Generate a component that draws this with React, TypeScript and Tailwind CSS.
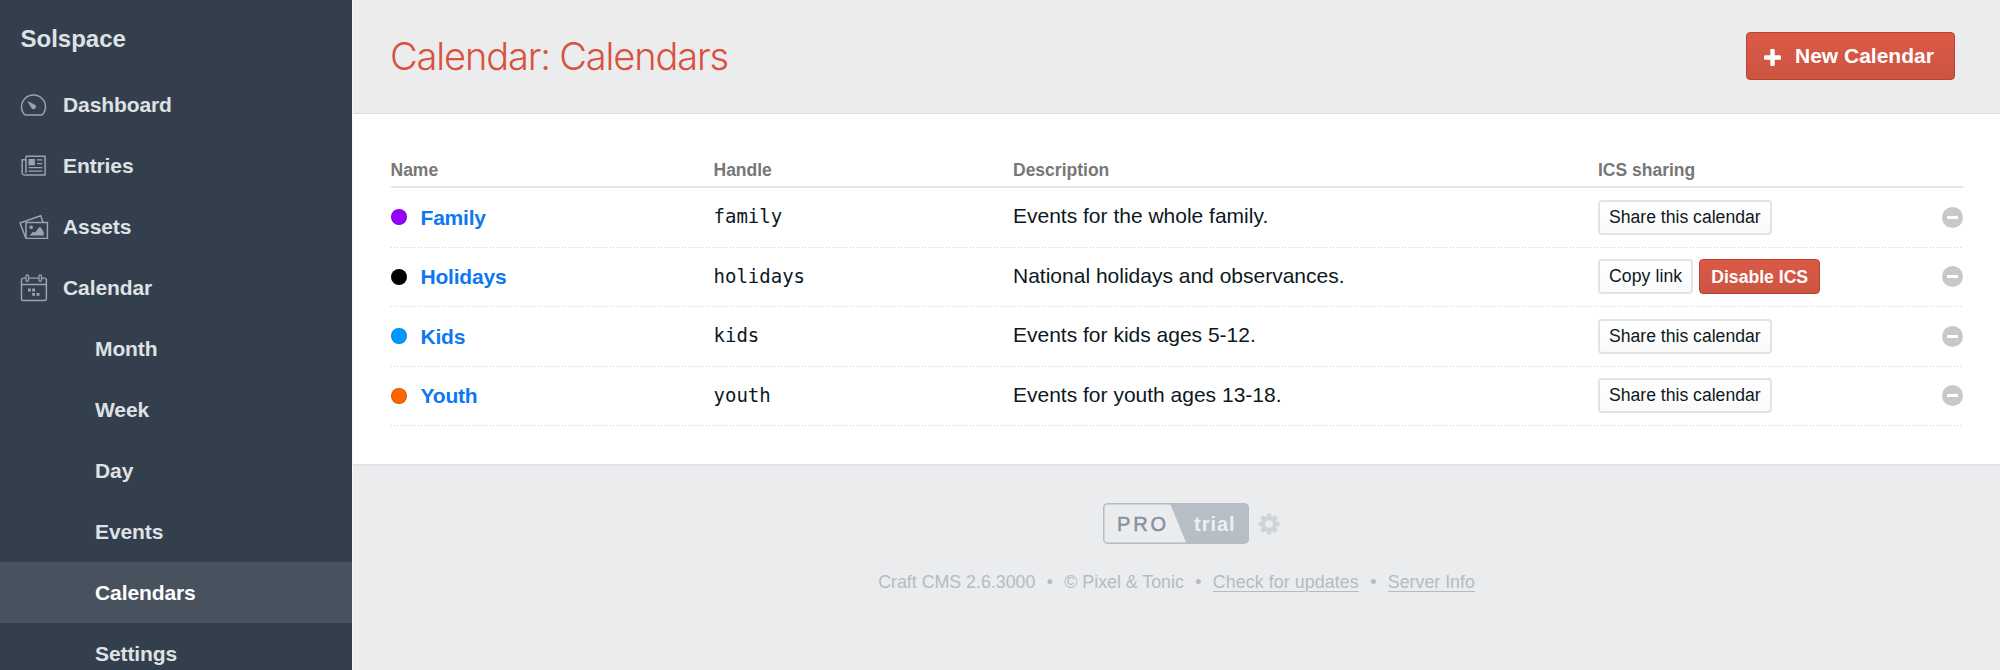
import React from "react";

const navItems = [
  { label: "Dashboard", icon: "dashboard" },
  { label: "Entries", icon: "entries" },
  { label: "Assets", icon: "assets" },
  { label: "Calendar", icon: "calendar" },
];

const subItems = ["Month", "Week", "Day", "Events", "Calendars", "Settings"];

const calendars = [
  { name: "Family", handle: "family", dot: "bg-[#9600ff]", text: "Events for the whole family.", shared: false },
  { name: "Holidays", handle: "holidays", dot: "bg-black", text: "National holidays and observances.", shared: true },
  { name: "Kids", handle: "kids", dot: "bg-[#0099ff]", text: "Events for kids ages 5-12.", shared: false },
  { name: "Youth", handle: "youth", dot: "bg-[#ff6600]", text: "Events for youth ages 13-18.", shared: false },
];

const COLS = "grid grid-cols-[323px_299.5px_585px_1fr_21px]";

function NavIcon({ name }: { name: string }) {
  return (
    <svg width="34" height="32" viewBox="0 0 32 30" fill="none" stroke="#9ca3ab" strokeWidth="1.4">
      {name === "dashboard" && (
        <>
          <path d="M6.7 24.4C4 21.900 3.300 19 3.300 16.800a11.300 11.200 0 0 1 22.600 0c0 2.200-.7 5.100-3.400 7.600z" strokeLinejoin="round" />
          <path d="M8.600 10.900l7.200 3.800a2.300 2.300 0 1 1-3.300 2.900z" fill="#9ca3ab" stroke="none" />
        </>
      )}
      {name === "entries" && (
        <>
          <path d="M7.500 5.800h18v17.600H5.800a1.900 1.900 0 0 1-1.900-1.900V9.100h3.300M7.500 5.800v15.800" strokeLinejoin="round" />
          <path d="M9.900 8.400h6v6h-6z" fill="#9ca3ab" stroke="none" />
          <path d="M17.900 9.200h5M17.900 12.700h5M9.900 16.500h13M9.900 19.900h13" strokeWidth="1.200" />
        </>
      )}
      {name === "assets" && (
        <>
          <path d="M7.500 10.700h20.200v15H7.500z" />
          <path d="M7.200 25.200L1.900 11.200 21.400 4.400l2 6" strokeLinejoin="round" />
          <circle cx="12.400" cy="15.300" r="1.700" fill="#9ca3ab" stroke="none" />
          <path d="M10.900 22.900l3.200-3.500 2 .8 4.100-5.100 1.600.6 2.400 4.300v2.900z" fill="#9ca3ab" stroke="none" />
        </>
      )}
      {name === "calendar" && (
        <>
          <path d="M7.200 5.700H5.100a1.800 1.800 0 0 0-1.800 1.800v17.500a1.800 1.800 0 0 0 1.800 1.800h19.800a1.800 1.800 0 0 0 1.800-1.800V7.500a1.800 1.800 0 0 0-1.800-1.800H22.500M10.300 5.700h9M3.300 11.800h23.400" />
          <rect x="7.500" y="2.700" width="2.400" height="6" rx="1.200" strokeWidth="1.200" />
          <rect x="19.700" y="2.700" width="2.400" height="6" rx="1.200" strokeWidth="1.200" />
          <path d="M9.400 15.500h2.700v2.700H9.400zM13.300 15.500h2.700v2.700h-2.700zM13.300 19.700h2.700v2.700h-2.700zM17.500 19.700h2.700v2.700h-2.700z" fill="#9ca3ab" stroke="none" />
        </>
      )}
    </svg>
  );
}

function Sidebar() {
  return (
    <aside className="flex w-[352px] shrink-0 flex-col bg-[#333f4d] text-[21px] font-bold tracking-[-0.1px] text-[#dfe2e4]">
      <div className="flex h-[74px] shrink-0 items-center pt-[3px] pl-[20.500px] text-[24px] tracking-normal">Solspace</div>
      {navItems.map((item) => (
        <a key={item.label} className="flex h-[61px] shrink-0 items-center pl-[18px]">
          <span className="mr-[11px] flex">
            <NavIcon name={item.icon} />
          </span>
          {item.label}
        </a>
      ))}
      {subItems.map((label) => (
        <a
          key={label}
          className={
            label === "Calendars"
              ? "flex h-[61px] shrink-0 items-center bg-[#47525e] pl-[95px] text-white"
              : "flex h-[61px] shrink-0 items-center pl-[95px]"
          }
        >
          {label}
        </a>
      ))}
    </aside>
  );
}

function SmallButton({ children }: { children: React.ReactNode }) {
  return (
    <button className="h-[35px] rounded-[4px] border-2 border-[#e1e3e6] bg-linear-to-b from-white to-[#fafafa] px-[9px] text-[17.600px] leading-[31px] whitespace-nowrap text-[#0d1822]">
      {children}
    </button>
  );
}

function Gear() {
  return (
    <svg width="22" height="22" viewBox="-11 -11 22 22" fill="#d0d4d9">
      {[0, 45, 90, 135].map((angle) => (
        <rect key={angle} x="-2.3" y="-10.600" width="4.600" height="21.200" rx="1.300" transform={`rotate(${angle})`} />
      ))}
      <circle r="8" />
      <circle r="3.800" fill="#ebecee" />
    </svg>
  );
}

function Footer() {
  return (
    <footer className="flex flex-1 flex-col items-center pt-[37px]">
      <div className="ml-[30px] flex items-center">
        <div className="relative flex h-[41px] w-[146px] items-center">
          <svg className="absolute inset-0" width="146" height="41" viewBox="0 0 146 41">
            <rect x="0.750" y="0.750" width="144.500" height="39.500" rx="4" fill="none" stroke="#b5bcc4" strokeWidth="1.500" />
            <path d="M67 0.500h74a4.500 4.500 0 0 1 4.500 4.500v31a4.500 4.500 0 0 1-4.500 4.500H83.500z" fill="#b7bec6" />
          </svg>
          <span className="relative ml-[14px] w-[77px] text-[20px] tracking-[2.800px] text-[#8593a0] [-webkit-text-stroke:0.5px_#8593a0]">PRO</span>
          <span className="relative text-[20px] font-bold tracking-[1px] text-[#edeff1]">trial</span>
        </div>
        <span className="ml-[9px] flex">
          <Gear />
        </span>
      </div>
      <div className="mt-[28px] flex text-[17.800px] leading-[21px] text-[#b4bbc4]">
        <span>Craft CMS 2.6.3000</span>
        <span className="w-[29px] text-center">•</span>
        <span>© Pixel &amp; Tonic</span>
        <span className="w-[29px] text-center">•</span>
        <a className="tracking-[0.100px] underline decoration-1 underline-offset-[3px]">Check for updates</a>
        <span className="w-[29px] text-center">•</span>
        <a className="underline decoration-1 underline-offset-[3px]">Server Info</a>
      </div>
    </footer>
  );
}

export default function App() {
  return (
    <div className="flex h-[670px] w-[2000px] overflow-hidden bg-[#ebecee] font-['Liberation_Sans',Arial,sans-serif]">
      <Sidebar />
      <main className="flex min-w-0 flex-1 flex-col border-l border-[#f6f6f7]">
        <header className="flex h-[114px] shrink-0 items-center justify-between border-b border-[#dfe0e2] pr-[45px] pb-px pl-[37px]">
          <h1 className="font-['Inter',sans-serif] text-[38px] font-light tracking-[-1.130px] text-[#da513c]">Calendar: Calendars</h1>
          <button className="flex h-[48px] w-[209px] items-center rounded-[4px] border border-[#bb4230] bg-linear-to-b from-[#dc5947] to-[#cb5541] pl-[17px] text-[21px] font-bold text-white">
            <svg width="17" height="17" viewBox="0 0 17 17" className="mt-[2px] mr-[14px]">
              <path d="M8.500 1.500v14M1.500 8.500h14" stroke="white" strokeWidth="4.400" strokeLinecap="round" />
            </svg>
            New Calendar
          </button>
        </header>
        <section className="h-[352px] shrink-0 border-b-2 border-[#e0e2e5] bg-white pr-[37px] pl-[37.500px]">
          <div className={`${COLS} h-[74px] items-end border-b-2 border-[#e4e5e8] pb-[5px] text-[17.500px] leading-[21px] font-bold text-[#777777]`}>
            <span>Name</span>
            <span>Handle</span>
            <span>Description</span>
            <span>ICS sharing</span>
          </div>
          {calendars.map((c) => (
            <div
              key={c.name}
              className={`${COLS} h-[59.500px] items-center bg-[repeating-linear-gradient(90deg,#cfd1d4_0_1.500px,transparent_1.500px_3px)] bg-[length:100%_1px] bg-bottom bg-no-repeat pb-px text-[21px] text-[#0d1822]`}
            >
              <div className="flex items-center">
                <span className={`${c.dot} mr-[14px] size-[16px] rounded-full border border-black/15`} />
                <a className="font-bold tracking-[-0.200px] text-[#0d78f2]">{c.name}</a>
              </div>
              <code className="pb-[2px] font-['DejaVu_Sans_Mono',monospace] text-[19px]">{c.handle}</code>
              <span className="pb-[3px]">{c.text}</span>
              <div className="flex gap-[6px]">
                {c.shared ? (
                  <>
                    <SmallButton>
                      <span className="tracking-[0.100px]">Copy link</span>
                    </SmallButton>
                    <button className="h-[35px] rounded-[4px] border border-[#bb4230] bg-linear-to-b from-[#dc5947] to-[#cb5541] px-[11px] text-[17.600px] leading-[32px] font-bold text-white">
                      Disable ICS
                    </button>
                  </>
                ) : (
                  <SmallButton>Share this calendar</SmallButton>
                )}
              </div>
              <svg width="21" height="21" viewBox="0 0 21 21">
                <circle cx="10.500" cy="10.500" r="10.500" fill="#c8c8c8" />
                <rect x="5" y="9" width="11" height="3" rx="0.600" fill="white" />
              </svg>
            </div>
          ))}
        </section>
        <Footer />
      </main>
    </div>
  );
}
